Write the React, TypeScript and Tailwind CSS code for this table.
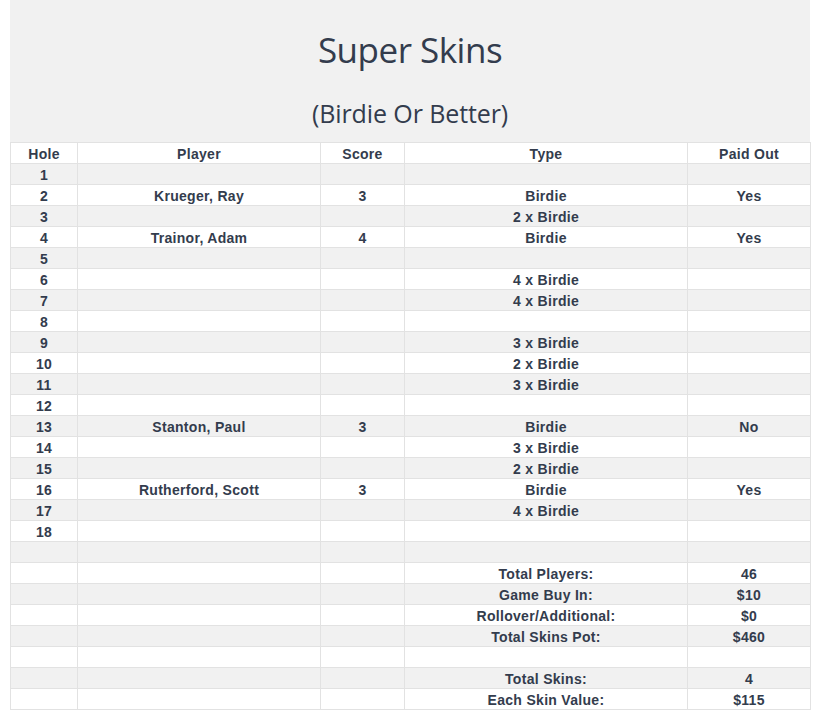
const HOLES: { hole: number; player?: string; score?: string; type?: string; paid?: string }[] = [
  { hole: 1 },
  { hole: 2, player: 'Krueger, Ray', score: '3', type: 'Birdie', paid: 'Yes' },
  { hole: 3, type: '2 x Birdie' },
  { hole: 4, player: 'Trainor, Adam', score: '4', type: 'Birdie', paid: 'Yes' },
  { hole: 5 },
  { hole: 6, type: '4 x Birdie' },
  { hole: 7, type: '4 x Birdie' },
  { hole: 8 },
  { hole: 9, type: '3 x Birdie' },
  { hole: 10, type: '2 x Birdie' },
  { hole: 11, type: '3 x Birdie' },
  { hole: 12 },
  { hole: 13, player: 'Stanton, Paul', score: '3', type: 'Birdie', paid: 'No' },
  { hole: 14, type: '3 x Birdie' },
  { hole: 15, type: '2 x Birdie' },
  { hole: 16, player: 'Rutherford, Scott', score: '3', type: 'Birdie', paid: 'Yes' },
  { hole: 17, type: '4 x Birdie' },
  { hole: 18 },
];

const SUMMARY: [string, string][] = [
  ['', ''],
  ['Total Players:', '46'],
  ['Game Buy In:', '$10'],
  ['Rollover/Additional:', '$0'],
  ['Total Skins Pot:', '$460'],
  ['', ''],
  ['Total Skins:', '4'],
  ['Each Skin Value:', '$115'],
];

function Row({ cells, gray }: { cells: (string | number | undefined)[]; gray: boolean }) {
  return (
    <tr className={gray ? 'h-[21px] bg-[#f1f1f1]' : 'h-[21px] bg-white'}>
      {cells.map((c, i) => (
        <td key={i} className="border border-[#e2e2e2] px-0 pb-0 pt-[2px] text-center leading-[18px]">
          {c ?? ''}
        </td>
      ))}
    </tr>
  );
}

export default function App() {
  return (
    <div className="min-h-screen bg-white pl-[10px] text-[#333c4d]">
      <div className="w-[800px]">
        <div className="flex h-[142px] flex-col items-center bg-[#f1f1f1] font-['Open_Sans',sans-serif]">
          <h1 className="mt-[26px] text-[35px] leading-[48px] tracking-[-0.5px]">Super Skins</h1>
          <h2 className="mt-[23px] text-[25px] leading-[32px] tracking-[-0.1px]">(Birdie Or Better)</h2>
        </div>
        <table className="w-[800px] table-fixed border-collapse font-['Liberation_Sans',Arial,sans-serif] text-[14px] font-bold tracking-[0.3px]">
          <colgroup>
            <col className="w-[67px]" />
            <col className="w-[243px]" />
            <col className="w-[84px]" />
            <col className="w-[283px]" />
            <col className="w-[123px]" />
          </colgroup>
          <thead>
            <tr className="h-[21px] bg-white">
              {['Hole', 'Player', 'Score', 'Type', 'Paid Out'].map((h) => (
                <th key={h} className="border border-[#e2e2e2] px-0 pb-0 pt-[2px] text-center font-bold leading-[18px]">
                  {h}
                </th>
              ))}
            </tr>
          </thead>
          <tbody>
            {HOLES.map((r, i) => (
              <Row key={r.hole} gray={i % 2 === 0} cells={[r.hole, r.player, r.score, r.type, r.paid]} />
            ))}
            {SUMMARY.map(([label, value], i) => (
              <Row key={i} gray={i % 2 === 0} cells={['', '', '', label, value]} />
            ))}
          </tbody>
        </table>
      </div>
    </div>
  );
}
